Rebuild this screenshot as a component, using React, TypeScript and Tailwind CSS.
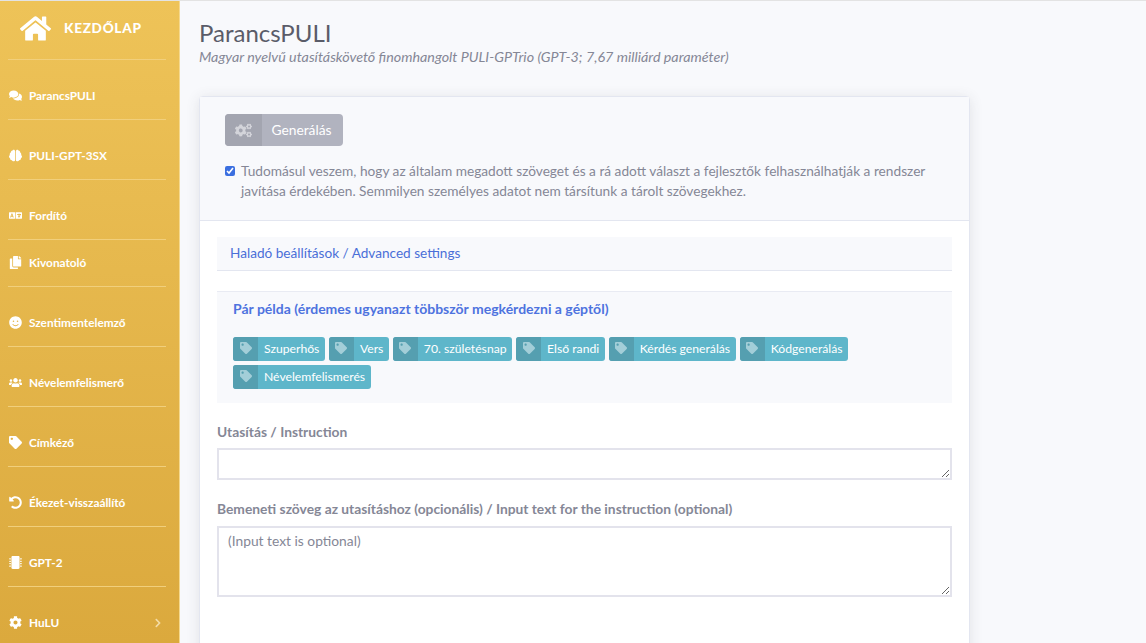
import {
  FaBrain,
  FaChevronRight,
  FaCog,
  FaCogs,
  FaComments,
  FaCopy,
  FaHome,
  FaLanguage,
  FaMicrochip,
  FaSmile,
  FaTag,
  FaUndoAlt,
  FaUsers,
} from 'react-icons/fa';
import type { IconType } from 'react-icons';

interface NavItem {
  label: string;
  icon: IconType;
  top: string;
  arrow?: boolean;
}

const navItems: NavItem[] = [
  { label: 'ParancsPULI', icon: FaComments, top: 'pt-[28px]' },
  { label: 'PULI-GPT-3SX', icon: FaBrain, top: 'pt-[28px]' },
  { label: 'Fordító', icon: FaLanguage, top: 'pt-[28px]' },
  { label: 'Kivonatoló', icon: FaCopy, top: 'pt-[15px]' },
  { label: 'Szentimentelemző', icon: FaSmile, top: 'pt-[28px]' },
  { label: 'Névelemfelismerő', icon: FaUsers, top: 'pt-[28px]' },
  { label: 'Címkéző', icon: FaTag, top: 'pt-[28px]' },
  { label: 'Ékezet-visszaállító', icon: FaUndoAlt, top: 'pt-[28px]' },
  { label: 'GPT-2', icon: FaMicrochip, top: 'pt-[28px]' },
  { label: 'HuLU', icon: FaCog, top: 'pt-[28px]', arrow: true },
];

const examples = [
  'Szuperhős',
  'Vers',
  '70. születésnap',
  'Első randi',
  'Kérdés generálás',
  'Kódgenerálás',
  'Névelemfelismerés',
];

function Sidebar() {
  return (
    <aside className="w-[180px] shrink-0 h-full overflow-hidden bg-gradient-to-b from-[#eec358] to-[#dba93d] border-r border-[#f5d98f] pl-[8px] pr-[13px]">
      <div className="h-[59px] flex items-center gap-[13px] pl-[12px] pb-[3px] text-white border-b border-[#f1cf7c]">
        <FaHome className="text-[31px]" />
        <span className="text-[13.6px] font-black tracking-[0.7px]">KEZDŐLAP</span>
      </div>
      {navItems.map((item) => (
        <div key={item.label} className={`${item.top} pb-[16px] border-b border-[#f1cf7c] last:border-b-0`}>
          <div className="flex items-center h-[15px] text-white">
            <span className="w-[14px] mr-[7px] flex items-center justify-center">
              <item.icon className="text-[13px] shrink-0" />
            </span>
            <span className="text-[11.8px] font-bold leading-[15px]">{item.label}</span>
            {item.arrow && <FaChevronRight className="ml-auto mr-[3px] text-[10px] text-[#f3dca6]" />}
          </div>
        </div>
      ))}
    </aside>
  );
}

function ExampleTag({ label }: { label: string }) {
  return (
    <span className="flex h-[24px] rounded-[3px] overflow-hidden bg-[#5eb6ca] text-white text-[12.2px]">
      <span className="w-[25px] bg-[#559fb0] flex justify-center pt-[5px]">
        <FaTag className="text-[12px] text-[#a3ced8]" />
      </span>
      <span className="pl-[6px] pr-[5.5px] leading-[24px]">{label}</span>
    </span>
  );
}

export default function App() {
  return (
    <div className="h-screen overflow-hidden bg-[#f8f9fc] border-t border-[#e3e3e3] flex font-['Lato',sans-serif] text-[#858796]">
      <Sidebar />
      <main className="flex-1 min-w-0 pl-[19px] pr-[176px]">
        <h1 className="mt-[17px] text-[24px] leading-[30px] text-[#5a5c69]">ParancsPULI</h1>
        <p className="-mt-[1px] text-[14.3px] leading-[20px] italic text-[#858796]">
          Magyar nyelvű utasításkövető finomhangolt PULI-GPTrio (GPT-3; 7,67 milliárd paraméter)
        </p>

        <section className="mt-[29px] rounded-[4px] bg-white border border-[#e3e6f0] shadow-[0_2px_14px_rgba(58,59,69,0.12)] h-[640px]">
          <div className="bg-[#f8f9fc] border-b border-[#e3e6f0] h-[124px] pl-[25px] pr-[20px] pt-[17px]">
            <button className="flex h-[32px] w-[118px] rounded-[4px] overflow-hidden bg-[#b1b3bf] text-white text-[13.8px]">
              <span className="w-[37px] h-full bg-[#a3a5b0] flex items-center justify-center">
                <FaCogs className="text-[17px] text-[#d3d4da]" />
              </span>
              <span className="flex-1 leading-[32px] text-center pr-[2px]">Generálás</span>
            </button>
            <label className="mt-[15px] flex gap-[6px] text-[13.7px] leading-[20px]">
              <input type="checkbox" defaultChecked className="mt-[5px] w-[10px] h-[10px] shrink-0 accent-[#3b6fe0]" />
              <span>
                Tudomásul veszem, hogy az általam megadott szöveget és a rá adott választ a fejlesztők felhasználhatják a rendszer javítása érdekében. Semmilyen személyes adatot nem társítunk a tárolt szövegekhez.
              </span>
            </label>
          </div>

          <div className="px-[17px] pt-[16px]">
            <div className="h-[34px] bg-[#f8f9fc] border-b border-[#e3e6f0] pl-[13px] text-[13.6px] leading-[32px] text-[#4a6fd8]">
              Haladó beállítások / Advanced settings
            </div>
            <div className="mt-[20px] bg-[#f8f9fc] border-t border-[#e9ebf3] h-[112px] pl-[16px] pr-[16px] pt-[7px]">
              <div className="text-[14px] leading-[20px] font-bold text-[#4e73df]">
                Pár példa (érdemes ugyanazt többször megkérdezni a géptől)
              </div>
              <div className="mt-[18px] flex flex-wrap gap-x-[4px] gap-y-[4px]">
                {examples.map((e) => (
                  <ExampleTag key={e} label={e} />
                ))}
              </div>
            </div>

            <div className="mt-[19px] text-[13.8px] leading-[20px] font-bold text-[#858796]">Utasítás / Instruction</div>
            <textarea className="mt-[6px] block w-full h-[32px] border-2 border-[#e3e3ec] bg-white outline-none" />

            <div className="mt-[19px] text-[13.8px] leading-[20px] font-bold text-[#858796]">
              Bemeneti szöveg az utasításhoz (opcionális) / Input text for the instruction (optional)
            </div>
            <textarea
              placeholder="(Input text is optional)"
              className="mt-[7px] block w-full h-[71px] border-2 border-[#e3e3ec] bg-white outline-none px-[9px] py-[3px] text-[13.8px] placeholder:text-[#858796]"
            />
          </div>
        </section>
      </main>
    </div>
  );
}
